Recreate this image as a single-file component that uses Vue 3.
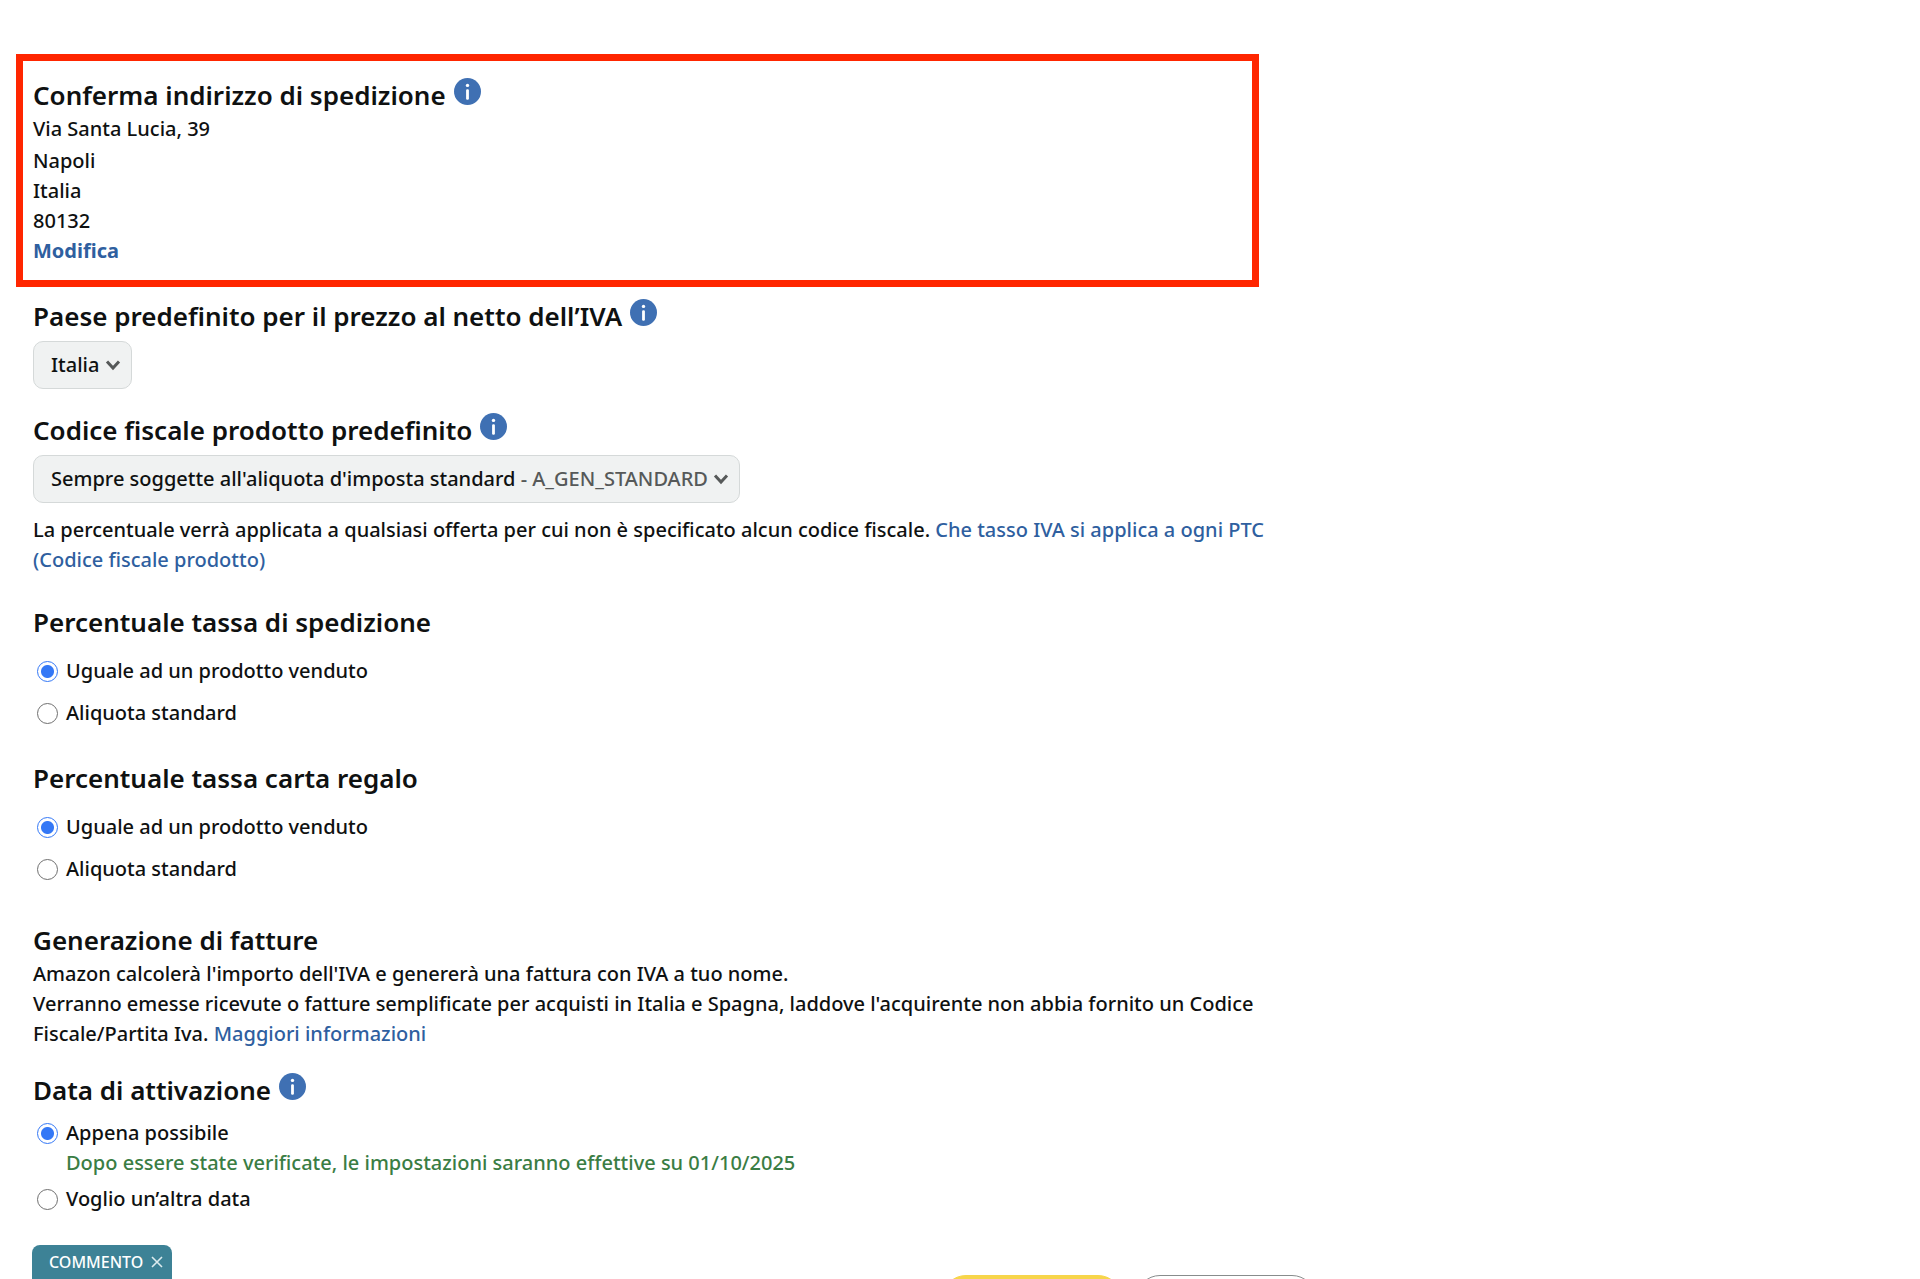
<template>
  <div class="page">
    <main class="settings">
      <!-- Indirizzo di spedizione -->
      <section class="address-box">
        <h2 class="heading">
          Conferma indirizzo di spedizione
          <button type="button" class="info-btn" aria-label="Informazioni sull'indirizzo">
            <svg viewBox="0 0 27 27" aria-hidden="true">
              <circle cx="13.5" cy="13.5" r="13.5" fill="#3f70b3" />
              <circle cx="13.5" cy="7.4" r="1.7" fill="#fff" />
              <rect x="12.1" y="11.2" width="2.8" height="10.6" rx="1.2" fill="#fff" />
            </svg>
          </button>
        </h2>
        <address class="address">
          <span v-for="line in address" :key="line">{{ line }}</span>
        </address>
        <a href="#" class="link edit-link">Modifica</a>
      </section>

      <!-- Paese predefinito -->
      <section class="section country">
        <h2 class="heading">
          <label for="country">Paese predefinito per il prezzo al netto dell’IVA</label>
          <button type="button" class="info-btn" aria-label="Informazioni sul paese">
            <svg viewBox="0 0 27 27" aria-hidden="true">
              <circle cx="13.5" cy="13.5" r="13.5" fill="#3f70b3" />
              <circle cx="13.5" cy="7.4" r="1.7" fill="#fff" />
              <rect x="12.1" y="11.2" width="2.8" height="10.6" rx="1.2" fill="#fff" />
            </svg>
          </button>
        </h2>
        <div class="dropdown">
          <select id="country" v-model="country">
            <option value="IT">Italia</option>
          </select>
          <svg class="chevron" viewBox="0 0 16 12" aria-hidden="true">
            <path d="M2 2.5 L8 9 L14 2.5" fill="none" stroke="#565959" stroke-width="3" />
          </svg>
        </div>
      </section>

      <!-- Codice fiscale prodotto -->
      <section class="section tax-code">
        <h2 class="heading">
          <label for="tax-code">Codice fiscale prodotto predefinito</label>
          <button type="button" class="info-btn" aria-label="Informazioni sul codice fiscale prodotto">
            <svg viewBox="0 0 27 27" aria-hidden="true">
              <circle cx="13.5" cy="13.5" r="13.5" fill="#3f70b3" />
              <circle cx="13.5" cy="7.4" r="1.7" fill="#fff" />
              <rect x="12.1" y="11.2" width="2.8" height="10.6" rx="1.2" fill="#fff" />
            </svg>
          </button>
        </h2>
        <div class="dropdown two-tone">
          <select id="tax-code" v-model="taxCode">
            <option v-for="t in taxCodes" :key="t.code" :value="t.code">{{ t.name }} - {{ t.code }}</option>
          </select>
          <span class="face" aria-hidden="true">{{ selectedTax.name }} <em>- {{ selectedTax.code }}</em></span>
          <svg class="chevron" viewBox="0 0 16 12" aria-hidden="true">
            <path d="M2 2.5 L8 9 L14 2.5" fill="none" stroke="#565959" stroke-width="3" />
          </svg>
        </div>
        <p class="text tax-note">
          La percentuale verrà applicata a qualsiasi offerta per cui non è specificato alcun codice fiscale.
          <a href="#" class="link">Che tasso IVA si applica a ogni PTC (Codice fiscale prodotto)</a>
        </p>
      </section>

      <!-- Percentuali -->
      <div class="rate-groups">
        <section v-for="group in rateGroups" :key="group.id" class="section">
          <h2 :id="group.id" class="heading">{{ group.title }}</h2>
          <div class="rate-options" role="radiogroup" :aria-labelledby="group.id">
            <label v-for="opt in rateOptions" :key="opt.value" class="radio">
              <input type="radio" :name="group.id" :value="opt.value" v-model="group.value" />
              <span>{{ opt.label }}</span>
            </label>
          </div>
        </section>
      </div>

      <!-- Fatture -->
      <section class="section invoices">
        <h2 class="heading">Generazione di fatture</h2>
        <p class="text">Amazon calcolerà l'importo dell'IVA e genererà una fattura con IVA a tuo nome.</p>
        <p class="text">
          Verranno emesse ricevute o fatture semplificate per acquisti in Italia e Spagna, laddove l'acquirente non abbia fornito un Codice Fiscale/Partita Iva.
          <a href="#" class="link">Maggiori informazioni</a>
        </p>
      </section>

      <!-- Data di attivazione -->
      <section class="section activation">
        <h2 id="activation" class="heading">
          Data di attivazione
          <button type="button" class="info-btn" aria-label="Informazioni sulla data">
            <svg viewBox="0 0 27 27" aria-hidden="true">
              <circle cx="13.5" cy="13.5" r="13.5" fill="#3f70b3" />
              <circle cx="13.5" cy="7.4" r="1.7" fill="#fff" />
              <rect x="12.1" y="11.2" width="2.8" height="10.6" rx="1.2" fill="#fff" />
            </svg>
          </button>
        </h2>
        <div class="date-options" role="radiogroup" aria-labelledby="activation">
          <label class="radio">
            <input type="radio" name="activation" value="asap" v-model="activation" />
            <span>Appena possibile</span>
          </label>
          <p class="text hint">Dopo essere state verificate, le impostazioni saranno effettive su 01/10/2025</p>
          <label class="radio">
            <input type="radio" name="activation" value="other" v-model="activation" />
            <span>Voglio un’altra data</span>
          </label>
        </div>
      </section>
    </main>

    <div class="actions">
      <button type="button" class="action primary" aria-label="Salva"></button>
      <button type="button" class="action" aria-label="Annulla"></button>
    </div>

    <div v-if="showComment" class="comment-tab">
      <button type="button" class="comment-open">COMMENTO</button>
      <button type="button" class="comment-close" aria-label="Chiudi" @click="showComment = false">
        <svg viewBox="0 0 12 12" aria-hidden="true">
          <path d="M1 1 L11 11 M11 1 L1 11" stroke="#dcebee" stroke-width="1.6" />
        </svg>
      </button>
    </div>
  </div>
</template>

<script setup>
import { computed, reactive, ref } from 'vue'

const address = ['Via Santa Lucia, 39', 'Napoli', 'Italia', '80132']

const country = ref('IT')

const taxCodes = [
  { code: 'A_GEN_STANDARD', name: "Sempre soggette all'aliquota d'imposta standard" }
]
const taxCode = ref('A_GEN_STANDARD')
const selectedTax = computed(() => taxCodes.find(t => t.code === taxCode.value))

const rateOptions = [
  { value: 'same', label: 'Uguale ad un prodotto venduto' },
  { value: 'standard', label: 'Aliquota standard' }
]
const rateGroups = reactive([
  { id: 'shipping-rate', title: 'Percentuale tassa di spedizione', value: 'same' },
  { id: 'gift-rate', title: 'Percentuale tassa carta regalo', value: 'same' }
])

const activation = ref('asap')
const showComment = ref(true)
</script>

<style>
body {
  margin: 0;
  background: #fff;
}
</style>

<style scoped>
.page {
  box-sizing: border-box;
  height: 100vh;
  overflow: hidden;
  padding: 54px 20px 0 16px;
  font-family: "Noto Sans", "Open Sans", sans-serif;
  font-size: 20px;
  font-weight: 500;
  line-height: 30px;
  color: #0f1111;
}

.settings {
  width: 68%;
}

.address-box {
  box-sizing: border-box;
  width: 97%;
  padding: 17px 10px 14px;
  border: 7px solid #ff2600;
}

.section {
  padding-left: 17px;
}

.heading {
  display: flex;
  gap: 8px;
  margin: 0;
  padding-bottom: 2px;
  font-size: 26px;
  line-height: 34px;
  font-weight: 600;
}

.info-btn {
  width: 27px;
  height: 27px;
  padding: 0;
  border: none;
  border-radius: 50%;
  background: none;
  cursor: pointer;
}

.info-btn svg {
  display: block;
  width: 27px;
  height: 27px;
}

.address {
  display: flex;
  flex-direction: column;
  font-style: normal;
}

.address span:first-child {
  margin-bottom: 2px;
}

.link {
  color: #2f5f9f;
  text-decoration: none;
}

.link:hover {
  text-decoration: underline;
}

.edit-link {
  display: block;
  font-weight: 700;
}

.text {
  margin: 0;
}

.country {
  margin-top: 12px;
}

.tax-code {
  margin-top: 24px;
}

.tax-note {
  margin-top: 12px;
}

.dropdown {
  display: inline-grid;
  align-items: center;
  margin-top: 6px;
  vertical-align: top;
}

.dropdown > * {
  grid-area: 1 / 1;
}

.dropdown select {
  height: 48px;
  padding: 0 31px 0 17px;
  border: 1px solid #d5d9d9;
  border-radius: 10px;
  background: #f0f2f2;
  color: inherit;
  font: inherit;
  appearance: none;
  cursor: pointer;
}

.two-tone select {
  color: transparent;
}

.two-tone option {
  color: #0f1111;
}

.face {
  padding-left: 18px;
  white-space: nowrap;
  pointer-events: none;
}

.face em {
  font-style: normal;
  color: #565959;
}

.chevron {
  justify-self: end;
  width: 16px;
  height: 12px;
  margin-right: 11px;
  pointer-events: none;
}

.rate-groups {
  display: flex;
  flex-direction: column;
  gap: 33px;
  margin-top: 30px;
}

.rate-options {
  display: flex;
  flex-direction: column;
  gap: 12px;
  margin-top: 15px;
}

.radio {
  display: flex;
  align-items: center;
  gap: 8px;
  padding-left: 4px;
}

.radio input {
  box-sizing: border-box;
  width: 21px;
  height: 21px;
  margin: 0;
  border: 1px solid #6f6f6f;
  border-radius: 50%;
  background: #fff;
  appearance: none;
}

.radio input:checked {
  border-color: #3478f6;
  background: radial-gradient(circle, #3478f6 6px, #fff 7px);
}

.invoices {
  margin-top: 39px;
}

.activation {
  margin-top: 24px;
}

.date-options {
  margin-top: 9px;
}

.hint {
  margin-bottom: 6px;
  padding-left: 33px;
  color: #3a7d44;
}

.actions {
  display: flex;
  justify-content: flex-end;
  gap: 14px;
  width: 69%;
  margin-top: 61px;
}

.action {
  width: 180px;
  height: 48px;
  border: 1px solid #888c8c;
  border-radius: 24px;
  background: #fff;
}

.primary {
  border-color: #f7d54a;
  background: #f7d54a;
}

.comment-tab {
  position: fixed;
  bottom: 0;
  left: 32px;
  display: flex;
  align-items: center;
  gap: 8px;
  height: 34px;
  padding: 0 9px 0 17px;
  border-radius: 8px 8px 0 0;
  background: #3d8296;
}

.comment-tab button {
  padding: 0;
  border: none;
  background: none;
  color: #fff;
  font: inherit;
  cursor: pointer;
}

.comment-tab .comment-open {
  font-size: 16px;
}

.comment-close svg {
  display: block;
  width: 12px;
  height: 12px;
}
</style>
